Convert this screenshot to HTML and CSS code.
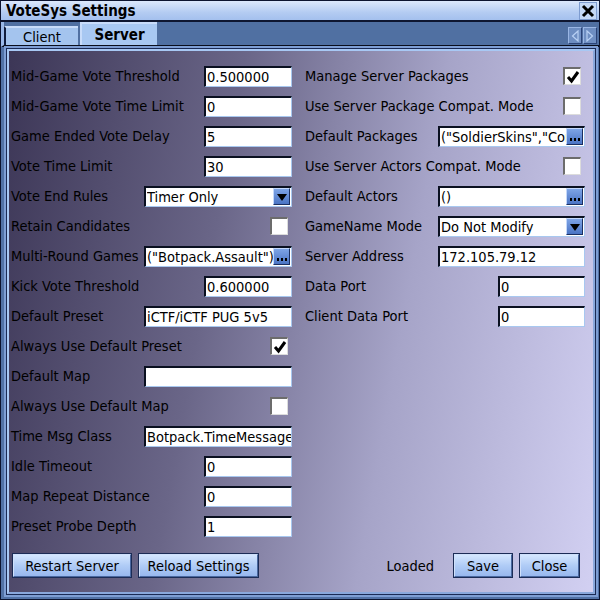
FILE: index.html
```html
<!DOCTYPE html>
<html>
<head>
<meta charset="utf-8">
<link rel="stylesheet" href="styles.css">
</head>
<body>
<div class="window">
  <div class="titlebar">
    <span class="title">VoteSys Settings</span>
    <span class="close"><svg width="14" height="14" viewBox="0 0 14 14"><path d="M2 2 L12 12 M12 2 L2 12" stroke="#000" stroke-width="3"/></svg></span>
  </div>
  <div class="tabstrip">
    <div class="tab">Client</div>
    <div class="tab active">Server</div>
    <div class="arrows">
      <span class="arrow"><svg width="8" height="12" viewBox="0 0 8 12"><path d="M7 1 L1.5 6 L7 11 Z" fill="none" stroke="#b8d0f4" stroke-width="1.2"/></svg></span>
      <span class="arrow"><svg width="8" height="12" viewBox="0 0 8 12"><path d="M1 1 L6.5 6 L1 11 Z" fill="none" stroke="#b8d0f4" stroke-width="1.2"/></svg></span>
    </div>
  </div>
  <div class="panel">
    <div class="columns">
      <div class="col">
        <div class="row"><span class="label">Mid-Game Vote Threshold</span><span class="field short">0.500000</span></div>
        <div class="row"><span class="label">Mid-Game Vote Time Limit</span><span class="field short">0</span></div>
        <div class="row"><span class="label">Game Ended Vote Delay</span><span class="field short">5</span></div>
        <div class="row"><span class="label">Vote Time Limit</span><span class="field short">30</span></div>
        <div class="row"><span class="label">Vote End Rules</span><span class="field wide combo"><span class="val">Timer Only</span><span class="btn drop"></span></span></div>
        <div class="row"><span class="label">Retain Candidates</span><span class="check"></span></div>
        <div class="row"><span class="label">Multi-Round Games</span><span class="field wide combo"><span class="val">("Botpack.Assault")</span><span class="btn dots"></span></span></div>
        <div class="row"><span class="label">Kick Vote Threshold</span><span class="field short">0.600000</span></div>
        <div class="row"><span class="label">Default Preset</span><span class="field wide">iCTF/iCTF PUG 5v5</span></div>
        <div class="row"><span class="label">Always Use Default Preset</span><span class="check on"><svg width="14" height="14" viewBox="0 0 14 14"><path d="M2 7 L5.5 11 L12 2" fill="none" stroke="#000" stroke-width="3"/></svg></span></div>
        <div class="row"><span class="label">Default Map</span><span class="field wide"></span></div>
        <div class="row"><span class="label">Always Use Default Map</span><span class="check"></span></div>
        <div class="row"><span class="label">Time Msg Class</span><span class="field wide">Botpack.TimeMessage</span></div>
        <div class="row"><span class="label">Idle Timeout</span><span class="field short">0</span></div>
        <div class="row"><span class="label">Map Repeat Distance</span><span class="field short">0</span></div>
        <div class="row"><span class="label">Preset Probe Depth</span><span class="field short">1</span></div>
      </div>
      <div class="col">
        <div class="row"><span class="label">Manage Server Packages</span><span class="check on"><svg width="14" height="14" viewBox="0 0 14 14"><path d="M2 7 L5.5 11 L12 2" fill="none" stroke="#000" stroke-width="3"/></svg></span></div>
        <div class="row"><span class="label">Use Server Package Compat. Mode</span><span class="check"></span></div>
        <div class="row"><span class="label">Default Packages</span><span class="field rwide combo"><span class="val">("SoldierSkins","Con</span><span class="btn dots"></span></span></div>
        <div class="row"><span class="label">Use Server Actors Compat. Mode</span><span class="check"></span></div>
        <div class="row"><span class="label">Default Actors</span><span class="field rwide combo"><span class="val">()</span><span class="btn dots"></span></span></div>
        <div class="row"><span class="label">GameName Mode</span><span class="field rwide combo"><span class="val">Do Not Modify</span><span class="btn drop"></span></span></div>
        <div class="row"><span class="label">Server Address</span><span class="field rwide">172.105.79.12</span></div>
        <div class="row"><span class="label">Data Port</span><span class="field port">0</span></div>
        <div class="row"><span class="label">Client Data Port</span><span class="field port">0</span></div>
      </div>
    </div>
    <div class="footer">
      <span class="button w118">Restart Server</span>
      <span class="button w119">Reload Settings</span>
      <span class="spacer"></span>
      <span class="status">Loaded</span>
      <span class="button w58">Save</span>
      <span class="button w59">Close</span>
    </div>
  </div>
</div>
</body>
</html>
```

FILE: styles.css
```css
* { box-sizing: border-box; }
html, body { margin: 0; padding: 0; }
body {
  width: 600px;
  height: 600px;
  overflow: hidden;
  font-family: "DejaVu Sans Condensed", "Liberation Sans", sans-serif;
  font-size: 14.5px;
  color: #000;
}
.window {
  width: 600px;
  height: 600px;
  background: #5272a6;
  border: 1px solid #0c1430;
  display: flex;
  flex-direction: column;
}
.titlebar {
  height: 21px;
  background: linear-gradient(#dce8fc, #b4ccf2 60%, #a4c0ee);
  border-bottom: 2px solid #0e1630;
  display: flex;
  align-items: center;
  padding-left: 5px;
  padding-right: 2px;
}
.title {
  font-weight: bold;
  font-size: 15px;
  flex: 1;
}
.close {
  width: 18px;
  height: 18px;
  background: #c4d8f6;
  border: 1px solid #7e9cd0;
  display: flex;
  align-items: center;
  justify-content: center;
}
.tabstrip {
  height: 25px;
  display: flex;
  align-items: flex-end;
  padding-left: 0;
  background: #5070a2;
  border-bottom: 2px solid #0a0e1c;
  border-left: 3px solid #9ab8e8;
}
.tab {
  height: 19px;
  width: 74px;
  background: #a4c4ee;
  border-left: 2px solid #101c3c;
  border-top: 2px solid #c8dcfa;
  display: flex;
  align-items: center;
  justify-content: center;
  font-size: 14.5px;
  margin-right: 2px;
}
.tab.active {
  height: 23px;
  width: 77px;
  font-weight: bold;
  font-size: 15px;
  background: #a8c8f2;
  border-left: 2px solid #c8dcfa;
}
.arrows {
  margin-left: auto;
  display: flex;
  gap: 1px;
  margin-bottom: 1px;
  margin-right: 2px;
}
.arrow {
  width: 14px;
  height: 17px;
  background: #6e8ec2;
  border: 1px solid #9ab6e4;
  border-right-color: #2c4478;
  border-bottom-color: #2c4478;
  display: flex;
  align-items: center;
  justify-content: center;
}
.panel {
  flex: 1;
  margin: 2px 4px 5px 6px;
  border: 2px solid #a8c8f4;
  border-right-color: #8aa8dc;
  border-bottom-color: #8aa8dc;
  box-shadow: 0 0 0 1px #1a2a54, 0 0 0 3px #7e9ed4;
  background: linear-gradient(100deg, #3c3656 0%, #6a6688 35%, #a6a4c8 65%, #d2d0f2 100%);
  padding: 10px 4px 0 2px;
  display: flex;
  flex-direction: column;
}
.columns {
  display: grid;
  grid-template-columns: 281px 280px;
  column-gap: 13px;
}
.row {
  height: 30px;
  display: flex;
  align-items: center;
  justify-content: space-between;
}
.label { white-space: nowrap; }
.field {
  height: 21px;
  background: #fff;
  border-top: 2px solid #0a1020;
  border-left: 2px solid #0a1020;
  border-right: 1px solid #a8c8f0;
  border-bottom: 1px solid #a8c8f0;
  padding-left: 1px;
  display: flex;
  align-items: center;
  white-space: nowrap;
  overflow: hidden;
  line-height: 18px;
}
.short { width: 88px; }
.wide { width: 148px; }
.rwide { width: 147px; }
.port { width: 87px; }
.val { flex: 1; overflow: hidden; white-space: nowrap; }
.btn {
  flex: none;
  width: 17px;
  height: 17px;
  margin-right: 1px;
  background: linear-gradient(#7ea4e6, #4a74c4);
  border: 1px solid #c4d8fa;
  border-right-color: #1c3060;
  border-bottom-color: #1c3060;
  display: flex;
  align-items: center;
  justify-content: center;
}
.drop::after {
  content: "";
  border-left: 5px solid transparent;
  border-right: 5px solid transparent;
  border-top: 7px solid #000;
  margin-top: 2px;
}
.dots { align-items: flex-end; padding-bottom: 3px; }
.dots::after {
  content: "";
  width: 2px;
  height: 3px;
  background: #000;
  box-shadow: -4px 0 0 #000, 4px 0 0 #000;
}
.check {
  width: 18px;
  height: 18px;
  margin-right: 4px;
  background: #fff;
  border-top: 2px solid #6c6c6c;
  border-left: 2px solid #6c6c6c;
  border-right: 1px solid #dcdcdc;
  border-bottom: 1px solid #dcdcdc;
  display: flex;
  align-items: center;
  justify-content: center;
}
.footer {
  margin-top: 13px;
  display: flex;
  align-items: center;
  gap: 8px;
  padding-left: 2px;
  padding-right: 10px;
}
.spacer { flex: 1; }
.status { margin-right: 12px; }
.button {
  height: 23px;
  background: linear-gradient(#d4e6ff, #b0ccf6 50%, #98b8ee);
  border: 1px solid #cfe0fb;
  box-shadow: 0 0 0 1px #1c2c56;
  border-right-color: #4a68a0;
  border-bottom-color: #4a68a0;
  display: flex;
  align-items: center;
  justify-content: center;
  white-space: nowrap;
}
.w118 { width: 118px; }
.w119 { width: 119px; }
.w58 { width: 58px; }
.w59 { width: 59px; }
```
